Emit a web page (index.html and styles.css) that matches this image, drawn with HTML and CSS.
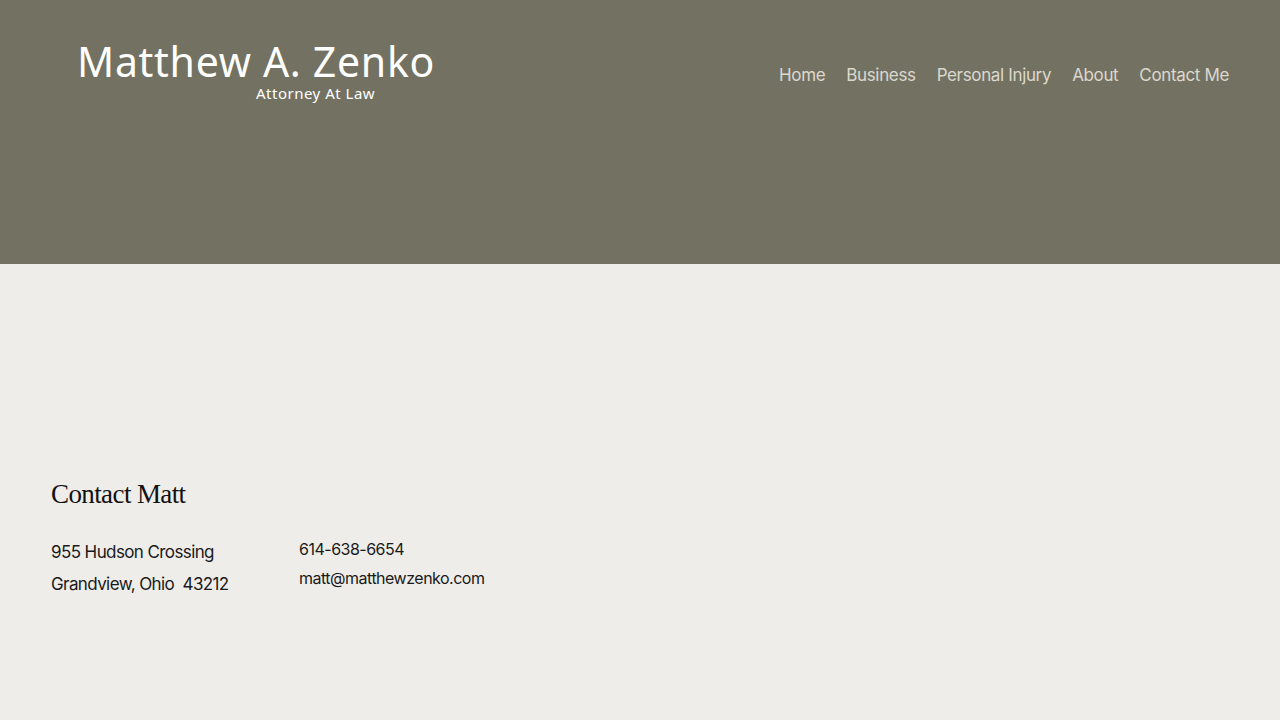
FILE: index.html
```html
<!DOCTYPE html>
<html lang="en">
<head>
<meta charset="utf-8">
<title>Matthew A. Zenko - Attorney At Law</title>
<link rel="stylesheet" href="styles.css">
</head>
<body>
<header class="site-header">
  <div class="brand">
    <div class="brand-name">Matthew A. Zenko</div>
    <div class="brand-tag">Attorney At Law</div>
  </div>
  <nav class="nav">
    <a href="#">Home</a>
    <a href="#">Business</a>
    <a href="#">Personal Injury</a>
    <a href="#">About</a>
    <a href="#">Contact Me</a>
  </nav>
</header>
<main class="content">
  <section class="contact">
    <h2 class="contact-title">Contact Matt</h2>
    <div class="contact-cols">
      <div class="address">
        <p>955 Hudson Crossing</p>
        <p>Grandview, Ohio&nbsp; 43212</p>
      </div>
      <div class="reach">
        <p>614-638-6654</p>
        <p>matt@matthewzenko.com</p>
      </div>
    </div>
  </section>
</main>
</body>
</html>
```

FILE: styles.css
```css
* { box-sizing: border-box; }
html, body { margin: 0; padding: 0; }
body {
  background: #eeedea;
  font-family: "Inter", "Liberation Sans", sans-serif;
  color: #1a1a1a;
  width: 1280px;
  height: 720px;
  overflow: hidden;
}
.site-header {
  background: #737262;
  height: 264px;
  display: flex;
  justify-content: space-between;
  align-items: flex-start;
  padding: 38px 51px 0 77px;
}
.brand { color: #ffffff; }
.brand-name {
  font-family: "Noto Sans", "Open Sans", sans-serif;
  font-size: 41px;
  font-weight: 400;
  line-height: 46px;
  letter-spacing: 0.7px;
}
.brand-tag {
  font-family: "Noto Sans", "Open Sans", sans-serif;
  font-size: 15px;
  line-height: 18px;
  padding-left: 179px;
  margin-top: 0;
  letter-spacing: 0.5px;
}
.nav {
  display: flex;
  gap: 21px;
  margin-top: 26px;
}
.nav a {
  color: #dcd8ce;
  text-decoration: none;
  font-size: 17px;
  letter-spacing: -0.35px;
  line-height: 22px;
}
.content { padding: 214px 51px 0 51px; }
.contact-title {
  margin: 0;
  font-family: "Liberation Serif", "DejaVu Serif", serif;
  font-weight: 400;
  font-size: 27px;
  line-height: 32px;
  letter-spacing: -0.6px;
  color: #111;
}
.contact-cols {
  display: flex;
  margin-top: 26px;
}
.contact-cols p { margin: 0; }
.address { width: 248px; }
.address p {
  font-size: 17px;
  line-height: 32px;
  letter-spacing: -0.6px;
}
.reach { margin-top: -1px; }
.reach p {
  font-size: 16px;
  line-height: 29px;
  letter-spacing: -0.5px;
}
```
